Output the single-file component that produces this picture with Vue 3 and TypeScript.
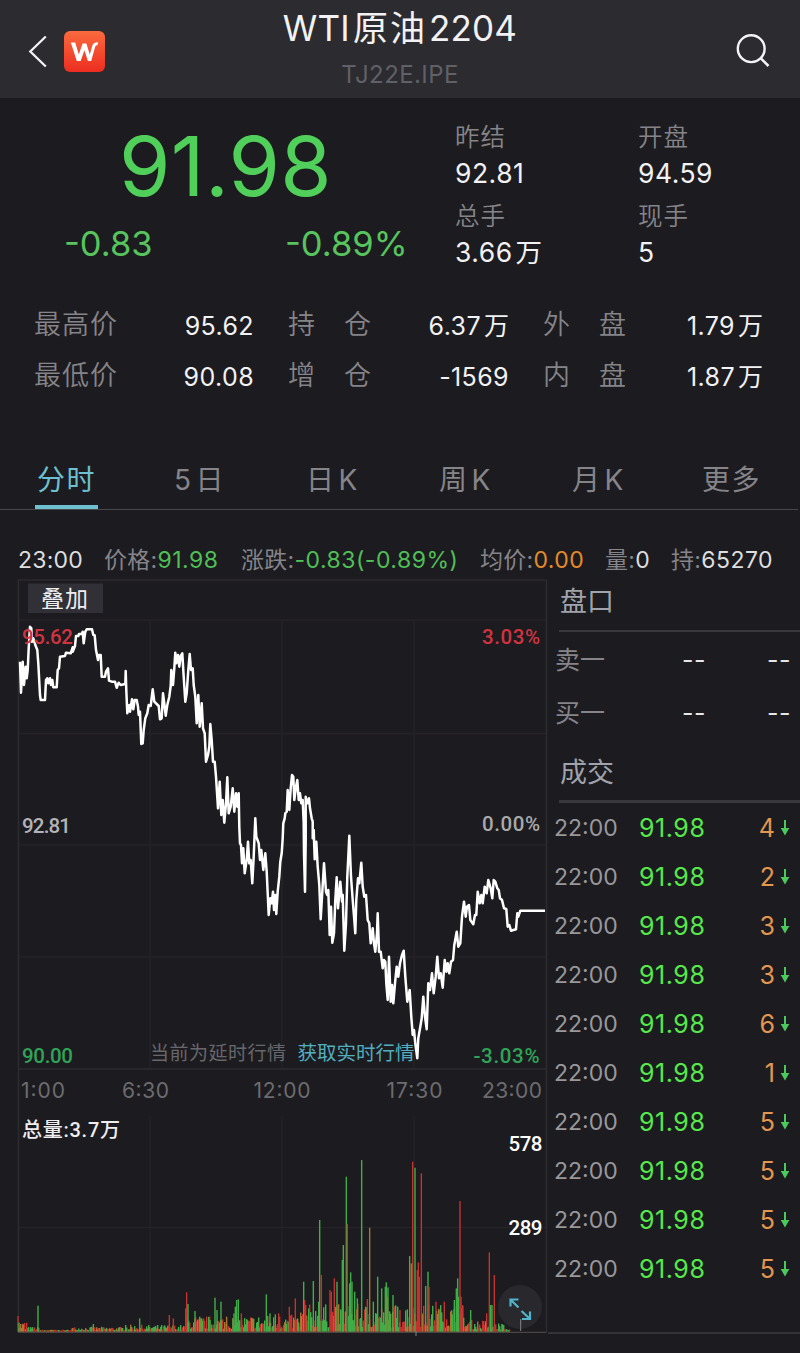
<script setup lang="ts">
interface Stat { label: string; value: string; unit?: string }
interface Bar { x: number; h: number; c: string }

const stats: Stat[] = [
  { label: '昨结', value: '92.81' },
  { label: '开盘', value: '94.59' },
  { label: '总手', value: '3.66', unit: '万' },
  { label: '现手', value: '5' },
]

const metrics: Stat[] = [
  { label: '最高价', value: '95.62' },
  { label: '持仓', value: '6.37', unit: '万' },
  { label: '外盘', value: '1.79', unit: '万' },
  { label: '最低价', value: '90.08' },
  { label: '增仓', value: '-1569' },
  { label: '内盘', value: '1.87', unit: '万' },
]

const tabs: string[][] = [['分时'], ['5', '日'], ['日', 'K'], ['周', 'K'], ['月', 'K'], ['更多']]

const trades: number[] = [4, 2, 3, 3, 6, 1, 5, 5, 5, 5]

const gridY: number[] = [620, 733.5, 845, 957]
const gridX: number[] = [150, 282, 414]

// Price samples are stored in thirds of a pixel, relative to an origin.
function trace(ox: number, oy: number, samples: string): string {
  return samples
    .trim()
    .split(/\s+/)
    .map((s) => {
      const [x, y] = s.split(',').map(Number)
      return `${(ox + x / 3).toFixed(1)},${(oy + y / 3).toFixed(1)}`
    })
    .join(' ')
}

const priceLine: string = [
  trace(10, 570, `30,275 33,368 38,275 42,345 47,290 50,325 53,300 56,235 60,170 64,175 66,215 70,205 76,225
    82,240 85,280 90,375 92,390 105,390 108,330 112,325 115,340 120,325 123,345 127,330 130,352 140,352 143,300
    147,295 150,260 165,258 168,248 182,250 188,232 188,245 195,228 198,198 205,198 207,192 215,192 218,185
    221,220 226,185 230,178 246,178 250,195 254,196 258,240 264,270 266,255 272,255 275,320 285,320 288,305
    294,295 297,332 305,335 315,335 320,353 326,338 332,345 346,342 347,303 349,360 352,430 358,405 360,425
    366,388 370,418 374,390 380,390 384,410 386,435 390,425 394,522 398,520 401,480 406,445 412,430 416,405
    422,408 428,358 433,395 440,402 446,408 450,448 455,445 459,370 463,400 467,437 472,405 478,380 482,348
    484,300 489,345 493,295 496,248 499,280 504,255 508,290 512,258 517,250 521,320 526,395 530,370 535,300
    539,252 543,300 548,295 551,345 556,380 560,460 565,375 569,470 575,400 579,475 584,490 588,575 594,555
    598,530 601,462 605,510 609,575 614,575 618,620 624,715 629,635 634,735 638,690 643,758 648,700 652,622
    656,730 662,710 668,655 673,725 678,670 682,710 686,670 688,770`),
  trace(10, 820, `690,70 693,75 696,130 700,85 704,160 710,120 714,65 718,130 722,120 727,190 731,110 736,-5
    739,50 746,70 750,120 754,90 760,150 766,100 770,155 776,285 781,235 785,250 789,215 792,270 796,225`),
  trace(270, 820, `19,282 23,215 28,170 31,125 35,100 38,55 40,10`),
  trace(270, 570, `44,745 46,730 50,725 53,660 58,720 62,655 66,615 70,620 73,690 78,650 82,630 86,690 90,670
    94,700 98,690 101,760`),
  trace(270, 820, `102,100 105,215 107,60`),
  trace(270, 570, `107,680 112,700 117,685 120,715 125,745 128,755`),
  trace(270, 820, `128,55 131,30 134,118 139,65 143,140 148,195 152,298 157,215 162,130 168,215 172,225 175,210
    179,345 183,260 187,368 192,340 196,240 200,172 204,265 208,220 211,185 216,245 218,225 223,392 228,310
    232,170 235,110 238,47 243,170 248,240 253,300 256,340 259,240 264,175 268,190 274,128 278,200 283,230
    288,225 293,300 298,310 302,370 308,325 312,370 316,395 321,340 323,280 327,395 332,395 338,445 342,420
    346,425 349,490 353,540 357,410 362,545 366,495 370,550 375,490 380,440 385,470 390,430 396,405 401,392
    406,470 412,545 419,510 424,590 428,645 432,630 436,670 442,715 445,655 451,620 455,595 460,530 465,590
    470,628 475,490 480,510 486,460 491,520 497,470 502,410 507,475 512,460 518,503 524,420 529,455 533,430
    538,460 543,425 549,420 553,375 560,335 565,380 571,370 576,290 582,245 587,290 591,260 597,255 601,300
    610,313 615,285 619,285 623,215 629,250 634,225 638,250 644,200 650,220 655,180 662,205 667,235 671,180
    676,185 682,205 686,210 690,235 696,240 702,265 709,267 713,320 718,315 723,332 738,328 742,280 745,290
    751,272 825,272`),
].join(' ')

// Deterministic small volume bars below the main spikes.
let seed = 7
function rnd(): number {
  seed = (seed * 16807) % 2147483647
  return seed / 2147483647
}
function ceiling(x: number): number {
  if (x < 25) return 10
  if (x < 39) return 4
  if (x < 70) return 1
  if (x < 124) return 4
  if (x < 165) return 6
  if (x < 185) return 6
  if (x < 250) return 15
  if (x < 300) return 16
  if (x < 465) return 27
  if (x < 490) return 11
  if (x < 504) return 8
  return 2
}
const noise: Bar[] = []
for (let x = 18; x < 510; x++) {
  const h = 1 + ceiling(x) * (0.12 + 0.88 * Math.pow(rnd(), 1.5))
  const k = rnd()
  noise.push({ x, h, c: k < 0.42 ? 'red' : k < 0.6 ? 'mix' : 'green' })
}

function spikes(ox: number, raw: string): Bar[] {
  return raw.trim().split(/\s+/).map((s) => {
    const kind = s[0]
    const [x, y] = s.slice(1).split(',').map(Number)
    return { x: ox + x / 3 - 0.7, h: (695 - y) / 3, c: kind === 'r' ? 'red' : kind === 'm' ? 'mix' : 'green' }
  })
}
const bars: Bar[] = [
  ...noise,
  ...spikes(10, `r24,648 g27,668 r50,668 g84,617 g250,672 g347,675 g389,655 r478,645 r490,655 r527,625 r530,577
    g534,612 g555,633 g569,650 g600,660 g615,593 g621,630 g633,605 m650,650 g669,655 g672,640 g676,620 g680,600
    g685,598 r694,640 g769,583 g780,640 g796,643 r806,640 r809,650`),
  ...spikes(270, `r58,620 r76,595 g101,545 r104,600 r107,615 g130,543 g146,605 g149,360 r154,525 r180,570 r184,575
    r193,535 g201,545 g217,480 g220,435 g229,230 r232,372 g239,550 g242,517 g246,545 g254,575 g262,595 g275,180
    r292,597 m299,383 g310,605 g323,530 g335,565 g346,560 g349,547 g354,562 m352,590 g369,585 r390,630 g412,628
    g419,468 m424,490 r428,185 g435,203 r442,510 r445,487 r448,530 r454,220 g467,558 g474,515 r477,560 r498,605
    g510,630 r523,605 g553,600 g559,565 g563,535 g566,590 r570,303 r573,590 r577,615 g602,630 r650,640 r658,457
    g662,615 g666,615 r673,525 g697,672`),
]
</script>

<template>
  <div class="page">
    <header class="bar">
      <svg class="back" width="24" height="36" viewBox="0 0 24 36">
        <path d="M19.800 3.500 L4.300 18.500 L19.800 33.500" fill="none" stroke="#f2f2f4" stroke-width="2.300" />
      </svg>
      <svg class="logo" width="41" height="41" viewBox="0 0 41 41">
        <defs>
          <linearGradient id="lg" x1="0" y1="0" x2="0" y2="1">
            <stop offset="0" stop-color="#fb6a3e" />
            <stop offset="1" stop-color="#ec2d20" />
          </linearGradient>
        </defs>
        <rect width="41" height="41" rx="6" fill="url(#lg)" />
        <path d="M6.800 11.500H11.200L14.800 23.500L18.600 12.600H22.400L25.800 23.500L28.200 15Q29.400 11.300 33.200 11.300H34.200L33.400 14.200H32.700Q31.600 14.400 31.200 15.800L27.200 30H23.900L20.400 19.200L16.700 30H12.800Z" fill="#fff" />
      </svg>
      <div class="titles">
        <div class="title">WTI<span class="han">原油</span>2204</div>
        <div class="code">TJ22E.IPE</div>
      </div>
      <svg class="search" width="40" height="40" viewBox="0 0 40 40">
        <circle cx="20.200" cy="18.700" r="13.400" fill="none" stroke="#f4f4f6" stroke-width="2.400" />
        <path d="M29.500 28 L37.500 36" stroke="#f4f4f6" stroke-width="2.500" />
      </svg>
    </header>

    <section class="summary">
      <div class="quote">
        <div class="last">91.98</div>
        <div class="change"><span>-0.83</span><span>-0.89%</span></div>
      </div>
      <div class="stats">
        <div v-for="s in stats" :key="s.label" class="stat">
          <div class="stat-label">{{ s.label }}</div>
          <div class="stat-value">{{ s.value }}<span v-if="s.unit" class="unit">{{ s.unit }}</span></div>
        </div>
      </div>
    </section>

    <section class="metrics">
      <div v-for="m in metrics" :key="m.label" class="metric">
        <div class="metric-label"><span v-for="ch in m.label" :key="ch">{{ ch }}</span></div>
        <div class="metric-value">{{ m.value }}<span v-if="m.unit" class="unit">{{ m.unit }}</span></div>
      </div>
    </section>

    <nav class="tabs">
      <div v-for="(t, i) in tabs" :key="i" class="tab" :class="{ active: i === 0 }">
        <span v-for="part in t" :key="part">{{ part }}</span>
      </div>
    </nav>

    <section class="info">
      <div class="light">23:00</div>
      <div>价格:<b class="green">91.98</b></div>
      <div>涨跌:<b class="green">-0.83(-0.89%)</b></div>
      <div>均价:<b class="orange">0.00</b></div>
      <div>量:<b class="light">0</b></div>
      <div>持:<b class="light">65270</b></div>
    </section>

    <main class="main">
      <svg class="chart" width="548" height="778" viewBox="0 575 548 778">
        <g fill="none" stroke="#242328" stroke-width="1.500">
          <path v-for="y in gridY" :key="'h' + y" :d="`M19 ${y}H546`" />
          <path v-for="x in gridX" :key="'v' + x" :d="`M${x} 620V1069M${x} 1116V1331`" />
          <path d="M19 1227.500H546" />
        </g>
        <g fill="none" stroke="#2c2b30" stroke-width="1.600">
          <path d="M18.500 1333V580H546.500V1333" />
          <path d="M18.500 1069H546.500" />
        </g>

        <rect x="28" y="583.500" width="75" height="29.500" fill="#303036" />
        <text class="zh" x="41" y="606.500" font-size="23" textLength="47" fill="#eeeef0">叠加</text>

        <text class="zh" x="150" y="1059.500" font-size="19" textLength="136" fill="#67676b">当前为延时行情</text>
        <text class="zh" x="297.500" y="1059.500" font-size="19.500" textLength="117" fill="#52aebf">获取实时行情</text>

        <polyline :points="priceLine" fill="none" stroke="#fff" stroke-width="2.500" stroke-linejoin="round" />

        <g class="din" font-size="20.500">
          <text x="22" y="644" textLength="51" fill="#cf3440">95.62</text>
          <text x="482" y="644" textLength="58" fill="#cf3440">3.03%</text>
          <text x="22" y="832.500" textLength="49" fill="#b4b4b8">92.81</text>
          <text x="482" y="831" textLength="58" fill="#a9a9ad">0.00%</text>
          <text x="22" y="1063" textLength="51" fill="#2fa458">90.00</text>
          <text x="473.500" y="1063" textLength="66" fill="#2fa458">-3.03%</text>
          <text x="508.500" y="1150.500" textLength="34" fill="#fff">578</text>
          <text x="508.500" y="1235" textLength="34" fill="#fff">289</text>
        </g>
        <g class="time" font-size="21" fill="#6c6c70">
          <text x="21" y="1097.500" textLength="44">1:00</text>
          <text x="122" y="1097.500" textLength="47">6:30</text>
          <text x="253.500" y="1097.500" textLength="57">12:00</text>
          <text x="386.500" y="1097.500" textLength="56">17:30</text>
          <text x="482" y="1097.500" textLength="60">23:00</text>
        </g>
        <text class="total" x="22" y="1137" font-size="20" textLength="98" fill="#eeeef0">总量:3.7万</text>

        <circle cx="520" cy="1307" r="22" fill="#29292d" />
        <rect v-for="(b, i) in bars" :key="i" :x="b.x" :y="1331.7 - b.h" width="1.400" :height="b.h" :class="b.c" />
        <path d="M18 1332.300H546" stroke="#55524f" stroke-width="1" />
        <path d="M416 1331V1336M520.700 1331V1319" stroke="#85858a" stroke-width="1" />
        <g fill="none" stroke="#4fb4cb" stroke-width="2.200">
          <path d="M510.500 1306.500V1299.500H518.500M511 1300L518.500 1307.500" />
          <path d="M530 1311.500V1319H522M521.500 1311L529.500 1318.500" />
        </g>
      </svg>

      <aside class="side">
        <h3>盘口</h3>
        <div class="book">
          <div class="level"><span>卖一</span><i>--</i><i>--</i></div>
          <div class="level"><span>买一</span><i>--</i><i>--</i></div>
        </div>
        <h3 class="deal">成交</h3>
        <div class="trades">
          <div v-for="(n, i) in trades" :key="i" class="trade">
            <span class="t">22:00</span>
            <span class="p">91.98</span>
            <span class="n">{{ n }}</span>
            <svg width="10" height="18" viewBox="0 0 10 18">
              <path d="M5 1V11" stroke="#4cc95c" stroke-width="2" />
              <path d="M0.700 9H9.300L5 16.500Z" fill="#4cc95c" />
            </svg>
          </div>
        </div>
      </aside>
    </main>
  </div>
</template>

<style>
body { background: #1c1b1f; }
</style>

<style scoped>
.page {
  width: 800px;
  height: 1353px;
  overflow: hidden;
  background: #1c1b1f;
  color: #f2f2f4;
  font-family: Inter, "Noto Sans CJK SC", sans-serif;
  font-weight: 400;
  white-space: nowrap;
}
.bar {
  box-sizing: border-box;
  height: 98px;
  padding: 0 29px 0 26px;
  display: flex;
  align-items: flex-start;
  background: #2c2b2f;
}
.back { margin-top: 33px; }
.logo { margin: 31px 0 0 14px; }
.titles { flex: 1; text-align: center; padding-top: 8px; padding-right: 36px; }
.title { font-size: 35px; line-height: 41px; letter-spacing: 0.200px; }
.han { letter-spacing: 2px; margin: 0 2px 0 3px; }
.code { font-size: 24px; line-height: 30px; margin-top: 11px; color: #606068; letter-spacing: 0.400px; }
.search { margin: 30px 0 0; }

.summary { display: flex; height: 201px; }
.quote { width: 455px; padding-top: 28px; color: #50d05a; }
.last { width: 451px; text-align: center; font-size: 83px; line-height: 80px; letter-spacing: 0.300px; }
.change {
  display: grid;
  grid-template-columns: 221px auto;
  margin-top: 18px;
  padding-left: 64px;
  font-size: 34.500px;
  line-height: 40px;
  color: #57c45d;
}
.stats {
  flex: 1;
  display: grid;
  grid-template-columns: 183px 1fr;
  grid-auto-rows: 79px;
  padding-top: 24px;
}
.stat-label { font-size: 24.500px; line-height: 30px; letter-spacing: 1px; color: #858489; font-weight: 350; }
.stat-value { font-size: 26.500px; line-height: 30px; margin-top: 6px; letter-spacing: 0.500px; }
.unit { margin-left: 3px; letter-spacing: 0; }

.metrics {
  display: grid;
  grid-template-columns: 219px 220px 219px;
  column-gap: 35px;
  grid-auto-rows: 51.500px;
  padding-left: 34px;
}
.metric { display: flex; justify-content: space-between; align-items: center; line-height: 52px; }
.metric-label { width: 83px; display: flex; justify-content: space-between; font-size: 27px; color: #858489; font-weight: 350; }
.metric-value { font-size: 25px; letter-spacing: 0.400px; padding-top: 2px; margin-right: -1px; }

.tabs {
  display: grid;
  grid-template-columns: repeat(6, 133px);
  width: 798px;
  margin-top: 49px;
  border-bottom: 1px solid #47474b;
}
.tab {
  box-sizing: border-box;
  height: 58px;
  line-height: 59px;
  display: flex;
  justify-self: center;
  gap: 3px;
  font-size: 28px;
  letter-spacing: 1.500px;
  color: #858489;
  padding: 0 1.500px;
}
.active { color: #6cc0cf; border-bottom: 4px solid #6cc0cf; }

.info {
  box-sizing: border-box;
  height: 65px;
  padding: 34px 0 0 18px;
  display: grid;
  grid-template-columns: 86px 137px 239px 125px 66px auto;
  font-size: 23px;
  line-height: 32px;
  color: #858489;
  letter-spacing: 0.250px;
}
.info b { font-weight: 400; letter-spacing: 0.500px; }
.light, .info .light { color: #dededf; }
.green { color: #50bf56; }
.orange { color: #e58a2a; }

.main { display: flex; height: 778px; }
.chart { display: block; flex: none; }
.zh { font-family: "Noto Sans CJK SC", sans-serif; }
.din { font-family: Roboto, sans-serif; font-weight: 500; }
.total { font-family: Roboto, "Noto Sans CJK SC", sans-serif; font-weight: 500; }
.time { font-family: Inter, sans-serif; }
rect.red { fill: #c4332f; }
rect.green { fill: #3fae48; }
rect.mix { fill: #a8752f; }

.side {
  box-sizing: border-box;
  flex: 1;
  height: 759px;
  border-bottom: 2px solid #343438;
}
h3 {
  margin: 0 0 0 11px;
  padding-left: 1px;
  height: 55px;
  line-height: 54px;
  font-size: 27px;
  font-weight: 400;
  color: #a0a3ab;
  border-bottom: 2px solid #38383d;
}
.deal { height: 60px; line-height: 65px; border-bottom-width: 3px; }
.book { padding-top: 2px; height: 106px; }
.level {
  display: grid;
  grid-template-columns: 74px 77px 85px;
  padding-left: 7px;
  height: 53px;
  line-height: 53px;
  font-size: 25px;
  color: #858489;
}
.level i { font-style: normal; color: #e6e6e8; text-align: right; letter-spacing: 0.500px; }
.trade {
  display: grid;
  grid-template-columns: 85px 70px 66px 10px;
  align-items: center;
  height: 49px;
  padding-left: 6px;
}
.trade span { line-height: 50px; }
.trade svg { margin-left: 5px; }
.t { font-size: 23px; color: #98989c; }
.p { font-size: 25px; color: #57e84c; letter-spacing: 0.550px; }
.n { font-size: 25px; color: #e3974f; text-align: right; }
</style>
